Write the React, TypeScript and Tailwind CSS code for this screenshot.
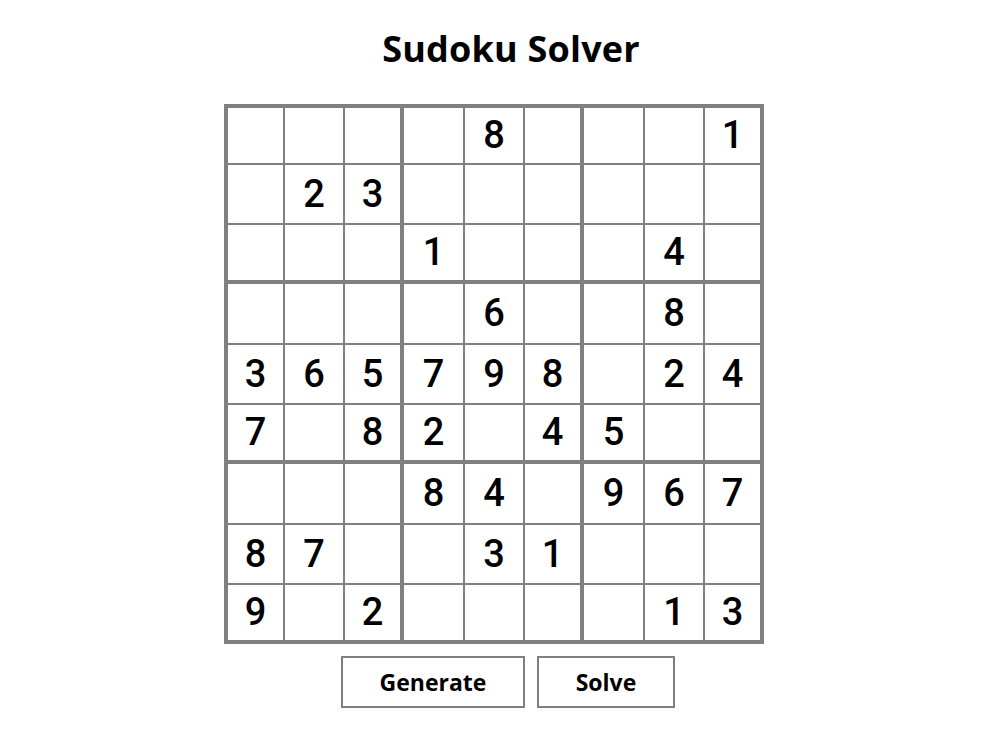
const puzzle: string[] = [
  "....8...1",
  ".23......",
  "...1...4.",
  "....6..8.",
  "365798.24",
  "7.82.45..",
  "...84.967",
  "87..31...",
  "9.2....13",
];

function cellBorders(r: number, c: number) {
  const cls = ["border-[#808080]", "border-solid"];
  cls.push(c === 0 ? "border-l-4" : c === 3 || c === 6 ? "border-l-0" : "border-l");
  cls.push(c === 8 || c === 2 || c === 5 ? "border-r-4" : "border-r");
  cls.push(r === 0 ? "border-t-4" : r === 3 || r === 6 ? "border-t-0" : "border-t");
  cls.push(r === 8 || r === 2 || r === 5 ? "border-b-4" : "border-b");
  return cls.join(" ");
}

export default function App() {
  return (
    <div className="min-h-screen bg-white flex flex-col items-center pt-[24px]">
      <h1 className="ml-[15px] text-[36px] leading-[50px] font-bold tracking-[0.2px] text-black [font-family:'Open_Sans',sans-serif]">
        Sudoku Solver
      </h1>

      <div className="mt-[30px] mr-[19px] grid grid-cols-[repeat(9,60px)] grid-rows-[repeat(9,60px)]">
        {puzzle.map((row, r) =>
          row.split("").map((ch, c) => (
            <div
              key={`${r}-${c}`}
              className={`${cellBorders(r, c)} flex items-center justify-center text-[38px] font-medium text-black [font-family:Roboto,sans-serif]`}
            >
              {ch === "." ? "" : ch}
            </div>
          ))
        )}
      </div>

      <div className="mt-[12px] ml-[9px] flex gap-[12px]">
        <button className="h-[52px] w-[184px] border-2 border-[#808080] bg-white text-[23px] font-bold text-black [font-family:'Open_Sans',sans-serif]">
          Generate
        </button>
        <button className="h-[52px] w-[138px] border-2 border-[#808080] bg-white text-[23px] font-bold text-black [font-family:'Open_Sans',sans-serif]">
          Solve
        </button>
      </div>
    </div>
  );
}
